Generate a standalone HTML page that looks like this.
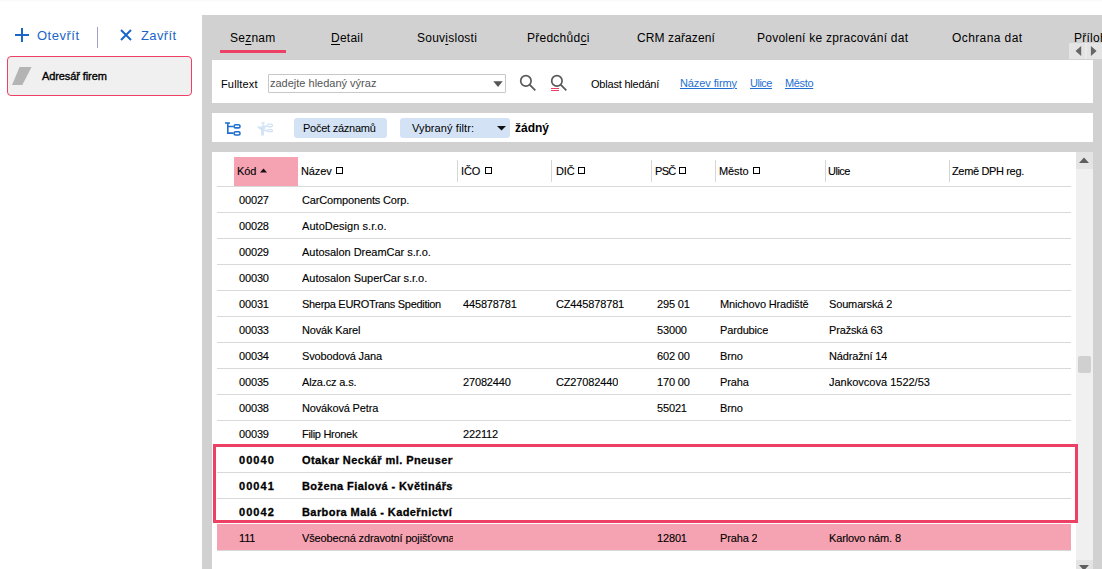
<!DOCTYPE html>
<html><head><meta charset="utf-8">
<style>
*{box-sizing:border-box;margin:0;padding:0}
html,body{width:1102px;height:569px;overflow:hidden;background:#fff;font-family:"Liberation Sans",sans-serif;color:#000}
.a{position:absolute;white-space:nowrap}
.t11{font-size:11px;line-height:11px}
.t12{font-size:12px;line-height:12px}
.t13{font-size:13px;line-height:13px}
#top{position:absolute;left:0;top:0;width:1102px;height:2px;background:linear-gradient(#fafafa 50%,#fdfdfd 50%)}
#gray{position:absolute;left:202px;top:15px;width:900px;height:554px;background:#d1d1d1}
.wbox{position:absolute;left:212px;width:881px;background:#fff}
.tab{position:absolute;top:32px;font-size:12px;line-height:12px;letter-spacing:0.25px;color:#000}
.u{text-decoration:underline;text-underline-offset:2px}
.link{color:#1e6fd0;text-decoration:underline;text-underline-offset:1px}
.btn{position:absolute;top:118px;height:20px;background:#d3e3f5;border-radius:3px}
.hl{position:absolute;left:217px;width:854px;height:1px;background:#d9d9d9}
.sep{position:absolute;top:160px;width:1px;height:22px;background:#d6d6d6}
.hd{position:absolute;top:165.7px;font-size:11px;line-height:11px;letter-spacing:-0.1px;color:#000;-webkit-text-stroke:0.12px #000}
.sq{position:absolute;top:167px;width:7px;height:7px;border:1px solid #000}
.row{position:absolute;left:212px;width:864px;height:26px}
.c{position:absolute;white-space:nowrap;-webkit-text-stroke:0.12px #000;font-size:11px;line-height:11px;letter-spacing:-0.15px;color:#000;overflow:hidden}
.b{font-weight:bold;letter-spacing:0;-webkit-text-stroke:0.3px #000}
</style></head><body>
<div id="top"></div>

<!-- left panel -->
<svg class="a" style="left:15px;top:28px" width="14" height="14" viewBox="0 0 14 14"><path d="M7 0V14M0 7H14" stroke="#1a66c8" stroke-width="2"/></svg>
<div class="a t13" style="left:37px;top:29px;color:#1a66c8;letter-spacing:0.5px">Otevřít</div>
<div class="a" style="left:97px;top:27px;width:1px;height:21px;background:#a0a0c8"></div>
<svg class="a" style="left:120px;top:29px" width="12" height="12" viewBox="0 0 12 12"><path d="M1 1L11 11M11 1L1 11" stroke="#1a66c8" stroke-width="2"/></svg>
<div class="a t13" style="left:141px;top:29px;color:#1a66c8;letter-spacing:0.4px">Zavřít</div>
<div class="a" style="left:7px;top:56px;width:185px;height:40px;background:#f0f0f0;border:1px solid #ec4065;border-radius:4px"></div>
<svg class="a" style="left:12px;top:67px" width="20" height="18" viewBox="0 0 20 18"><path d="M7.6 0H19.6L10.3 18H0Z" fill="#b4b4b4"/></svg>
<div class="a t11" style="left:42px;top:71px;letter-spacing:-0.1px;color:#000;-webkit-text-stroke:0.35px #000">Adresář firem</div>

<!-- right panel -->
<div id="gray"></div>
<div class="tab u0" style="left:230px">Se<span class="u">z</span>nam</div>
<div class="tab" style="left:331px"><span class="u">D</span>etail</div>
<div class="tab" style="left:417px">Souv<span class="u">i</span>slosti</div>
<div class="tab" style="left:527px">Předchůd<span class="u">c</span>i</div>
<div class="tab" style="left:637px;letter-spacing:0.1px">CRM zařazení</div>
<div class="tab" style="left:757px">Povolení ke zpracování dat</div>
<div class="tab" style="left:952px;letter-spacing:0.4px">Ochrana dat</div>
<div class="tab" style="left:1074px">Přílohy</div>
<div class="a" style="left:220px;top:50px;width:66px;height:3px;background:#ec4065"></div>
<div class="a" style="left:1069px;top:43px;width:33px;height:16px;background:#e4e4e4"></div>
<svg class="a" style="left:1069px;top:43px" width="33" height="16" viewBox="0 0 33 16"><path d="M12.2 3V13L6.5 8Z M21.9 3V13L27.6 8Z" fill="#666"/><rect x="16.5" y="0" width="1" height="16" fill="#efefef"/></svg>

<!-- fulltext box -->
<div class="wbox" style="top:60px;height:43px"></div>
<div class="a t11" style="left:221px;top:78.7px;letter-spacing:0.15px;color:#000">Fulltext</div>
<div class="a" style="left:268px;top:74px;width:238px;height:19px;border:1px solid #c8c8c8;border-radius:1px;background:#fff"></div>
<div class="a t11" style="left:270px;top:78px;color:#555">zadejte hledaný výraz</div>
<svg class="a" style="left:493px;top:81px" width="10" height="7" viewBox="0 0 10 7"><path d="M0.3 0.2H9.7L5 5.9Z" fill="#555"/></svg>
<svg class="a" style="left:518px;top:73px" width="20" height="20" viewBox="0 0 20 20"><circle cx="7.9" cy="7.9" r="5.2" fill="none" stroke="#5a5a5a" stroke-width="1.7"/><path d="M11.6 11.6L17.3 17.3" stroke="#5a5a5a" stroke-width="1.8"/></svg>
<svg class="a" style="left:549px;top:73px" width="20" height="20" viewBox="0 0 20 20"><circle cx="7.9" cy="7.9" r="5.2" fill="none" stroke="#5a5a5a" stroke-width="1.7"/><path d="M11.6 11.6L17.3 17.3" stroke="#5a5a5a" stroke-width="1.8"/><path d="M2 15.5H10M2 17.5H10" stroke="#ec4065" stroke-width="1"/></svg>
<div class="a t11" style="left:591px;top:78.7px;letter-spacing:-0.2px;color:#000">Oblast hledání</div>
<div class="a t11 link" style="left:680px;top:77.9px;letter-spacing:-0.1px">Název firmy</div>
<div class="a t11 link" style="left:750px;top:77.9px;letter-spacing:-0.5px">Ulice</div>
<div class="a t11 link" style="left:785px;top:77.9px;letter-spacing:-0.35px">Město</div>

<!-- toolbar box -->
<div class="wbox" style="top:113px;height:29px"></div>
<svg class="a" style="left:220px;top:116px" width="56" height="24" viewBox="0 0 56 24"><g fill="none" stroke="#1f6fd0" stroke-width="1.6"><path d="M5 7H10M7.8 6.2V17.1H13.5M7.8 10.5H13.5"/><rect x="14.1" y="8.8" width="5.9" height="3.1" rx="1.5"/><rect x="14.1" y="15.8" width="5.9" height="3.2" rx="1.5"/></g><g fill="#d2e3f5" stroke="#d2e3f5"><path d="M36.6 10.6H46.2L43.9 14.6V19.6H41.1V14.6Z" stroke="none"/><path d="M41.2 6.8H44.7M43 6.5V11M43 10.1H47.3M43.5 14.5H47.3" fill="none" stroke-width="1.3"/><rect x="47.35" y="8.05" width="5.1" height="2.7" rx="1.3" fill="none" stroke-width="1.3"/><rect x="47.35" y="13.65" width="5.1" height="2" rx="1" fill="none" stroke-width="1.3"/></g></svg>
<div class="btn" style="left:294px;width:93px"></div>
<div class="a t11" style="left:303px;top:123px;letter-spacing:-0.25px;color:#000">Počet záznamů</div>
<div class="btn" style="left:400px;width:110px"></div>
<div class="a t11" style="left:412px;top:123px;letter-spacing:0.1px;color:#000">Vybraný filtr:</div>
<svg class="a" style="left:497px;top:126px" width="9" height="5" viewBox="0 0 9 5"><path d="M0 0H9L4.5 4.5Z" fill="#111"/></svg>
<div class="a t12" style="left:515px;top:122.3px;font-weight:bold;color:#000">žádný</div>

<!-- grid -->
<div class="wbox" style="top:152px;height:417px"></div>
<!-- scrollbar -->
<div class="a" style="left:1076px;top:152px;width:17px;height:417px;background:#f0f0f0"></div>
<div class="a" style="left:1076px;top:152px;width:17px;height:17px;background:#e4e4e4"></div>
<svg class="a" style="left:1076px;top:152px" width="17" height="17" viewBox="0 0 17 17"><path d="M3 11H13L8 5.5Z" fill="#5e5e5e"/></svg>
<div class="a" style="left:1078px;top:356px;width:13px;height:17px;background:#d0d0d0;border-radius:2px"></div>
<div class="a" style="left:1076px;top:560px;width:17px;height:17px;background:#e4e4e4"></div>
<svg class="a" style="left:1076px;top:560px" width="17" height="17" viewBox="0 0 17 17"><path d="M3 5H13L8 10.5Z" fill="#5e5e5e"/></svg>

<!-- header -->
<div class="hl" style="top:186px"></div>
<div class="a" style="left:234px;top:157px;width:64px;height:29px;background:#f5a3b2"></div>
<div class="hd" style="left:237px">Kód</div><svg class="a" style="left:260px;top:168px" width="7" height="5" viewBox="0 0 7 5"><path d="M0 4.5H7L3.5 0.5Z" fill="#111"/></svg>
<div class="hd" style="left:301px">Název</div>
<div class="sep" style="left:457px"></div>
<div class="hd" style="left:461px">IČO</div>
<div class="sep" style="left:551px"></div>
<div class="hd" style="left:556px">DIČ</div>
<div class="sep" style="left:651px"></div>
<div class="hd" style="left:655px;letter-spacing:-0.7px">PSČ</div>
<div class="sep" style="left:715px"></div>
<div class="hd" style="left:719px">Město</div>
<div class="sep" style="left:825px"></div>
<div class="hd" style="left:828px;letter-spacing:-0.5px">Ulice</div>
<div class="sep" style="left:949px"></div>
<div class="hd" style="left:952px;letter-spacing:-0.35px">Země DPH reg.</div>
<div class="sq" style="left:336px"></div><div class="sq" style="left:485px"></div><div class="sq" style="left:578px"></div><div class="sq" style="left:679px"></div><div class="sq" style="left:753px"></div>

<!--ROWS-->
<div class="hl" style="top:212px"></div>
<div class="c" style="left:239px;top:194.7px;">00027</div>
<div class="c" style="left:302px;top:194.7px;width:151px;">CarComponents Corp.</div>
<div class="hl" style="top:238px"></div>
<div class="c" style="left:239px;top:220.7px;">00028</div>
<div class="c" style="left:302px;top:220.7px;width:151px;letter-spacing:0.05px;">AutoDesign s.r.o.</div>
<div class="hl" style="top:264px"></div>
<div class="c" style="left:239px;top:246.7px;">00029</div>
<div class="c" style="left:302px;top:246.7px;width:151px;letter-spacing:-0.03px;">Autosalon DreamCar s.r.o.</div>
<div class="hl" style="top:290px"></div>
<div class="c" style="left:239px;top:272.7px;">00030</div>
<div class="c" style="left:302px;top:272.7px;width:151px;letter-spacing:-0.03px;">Autosalon SuperCar s.r.o.</div>
<div class="hl" style="top:316px"></div>
<div class="c" style="left:239px;top:298.7px;">00031</div>
<div class="c" style="left:302px;top:298.7px;width:151px;letter-spacing:-0.31px;">Sherpa EUROTrans Spedition</div>
<div class="c" style="left:463px;top:298.7px;">445878781</div>
<div class="c" style="left:556px;top:298.7px;">CZ445878781</div>
<div class="c" style="left:657px;top:298.7px;">295 01</div>
<div class="c" style="left:720px;top:298.7px;">Mnichovo Hradiště</div>
<div class="c" style="left:829px;top:298.7px;">Soumarská 2</div>
<div class="hl" style="top:342px"></div>
<div class="c" style="left:239px;top:324.7px;">00033</div>
<div class="c" style="left:302px;top:324.7px;width:151px;">Novák Karel</div>
<div class="c" style="left:657px;top:324.7px;">53000</div>
<div class="c" style="left:720px;top:324.7px;">Pardubice</div>
<div class="c" style="left:829px;top:324.7px;">Pražská 63</div>
<div class="hl" style="top:368px"></div>
<div class="c" style="left:239px;top:350.7px;">00034</div>
<div class="c" style="left:302px;top:350.7px;width:151px;letter-spacing:-0.15px;">Svobodová Jana</div>
<div class="c" style="left:657px;top:350.7px;">602 00</div>
<div class="c" style="left:720px;top:350.7px;">Brno</div>
<div class="c" style="left:829px;top:350.7px;">Nádražní 14</div>
<div class="hl" style="top:394px"></div>
<div class="c" style="left:239px;top:376.7px;">00035</div>
<div class="c" style="left:302px;top:376.7px;width:151px;">Alza.cz a.s.</div>
<div class="c" style="left:463px;top:376.7px;">27082440</div>
<div class="c" style="left:556px;top:376.7px;">CZ27082440</div>
<div class="c" style="left:657px;top:376.7px;">170 00</div>
<div class="c" style="left:720px;top:376.7px;">Praha</div>
<div class="c" style="left:829px;top:376.7px;letter-spacing:0px;">Jankovcova 1522/53</div>
<div class="hl" style="top:420px"></div>
<div class="c" style="left:239px;top:402.7px;">00038</div>
<div class="c" style="left:302px;top:402.7px;width:151px;">Nováková Petra</div>
<div class="c" style="left:657px;top:402.7px;">55021</div>
<div class="c" style="left:720px;top:402.7px;">Brno</div>
<div class="hl" style="top:446px"></div>
<div class="c" style="left:239px;top:428.7px;">00039</div>
<div class="c" style="left:302px;top:428.7px;width:151px;letter-spacing:-0.3px;">Filip Hronek</div>
<div class="c" style="left:463px;top:428.7px;">222112</div>
<div class="hl" style="top:472px"></div>
<div class="c b" style="left:239px;top:454.7px;letter-spacing:1.05px;">00040</div>
<div class="c b" style="left:302px;top:454.7px;width:151px;letter-spacing:0.42px;">Otakar Neckář ml. Pneuservis</div>
<div class="hl" style="top:498px"></div>
<div class="c b" style="left:239px;top:480.7px;letter-spacing:1.05px;">00041</div>
<div class="c b" style="left:302px;top:480.7px;width:151px;letter-spacing:0.42px;">Božena Fialová - Květinářství</div>
<div class="hl" style="top:524px"></div>
<div class="c b" style="left:239px;top:506.7px;letter-spacing:1.05px;">00042</div>
<div class="c b" style="left:302px;top:506.7px;width:151px;letter-spacing:0.42px;">Barbora Malá - Kadeřnictví</div>
<div class="hl" style="top:550px"></div>
<div class="a" style="left:217px;top:524px;width:854px;height:26px;background:#f5a3b2"></div>
<div class="c" style="left:239px;top:532.7px;">111</div>
<div class="c" style="left:302px;top:532.7px;width:151px;">Všeobecná zdravotní pojišťovna</div>
<div class="c" style="left:657px;top:532.7px;">12801</div>
<div class="c" style="left:720px;top:532.7px;">Praha 2</div>
<div class="c" style="left:829px;top:532.7px;">Karlovo nám. 8</div>
<div class="a" style="left:213px;top:444px;width:865px;height:79px;border:3px solid #ec4065"></div>
<!--/ROWS-->
</body></html>
